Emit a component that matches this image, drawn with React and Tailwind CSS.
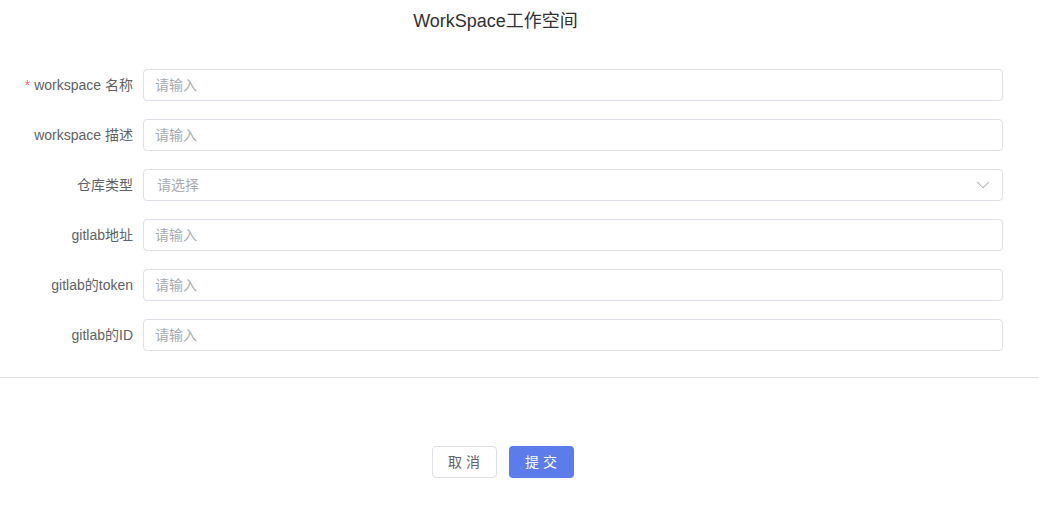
import { ChevronDown } from 'lucide-react'

const fields = [
  { label: 'workspace 名称', required: true, placeholder: '请输入' },
  { label: 'workspace 描述', placeholder: '请输入' },
  { label: '仓库类型', placeholder: '请选择', select: true },
  { label: 'gitlab地址', placeholder: '请输入' },
  { label: 'gitlab的token', placeholder: '请输入' },
  { label: 'gitlab的ID', placeholder: '请输入' },
]

export default function App() {
  return (
    <div
      className="w-[1039px] h-[509px] bg-white flex flex-col"
      style={{ fontFamily: '"Liberation Sans", "Noto Sans CJK SC", sans-serif' }}
    >
      <h2 className="mt-[9px] h-6 pr-[48px] text-center text-[18px] leading-6 text-[#303133]">WorkSpace工作空间</h2>

      {/* form */}
      <div className="mt-9 flex flex-col gap-[18px] pr-9">
        {fields.map(({ label, required, placeholder, select }) => (
          <div key={label} className="flex items-center h-8">
            <label className="w-[143px] shrink-0 pr-[10px] text-right text-[14px] text-[#606266]">
              {required && <span className="text-[#f56c6c] mr-1">*</span>}
              {label}
            </label>
            <div className="flex-1 h-8 flex items-center justify-between rounded border border-[#dcdfe6] pl-[11px] pr-[8px] text-[14px] text-[#a8abb2]">
              <span className={select ? 'pl-[2px]' : ''}>{placeholder}</span>
              {select && <ChevronDown size={22} strokeWidth={1.1} className="text-[#a8abb2]" />}
            </div>
          </div>
        ))}
      </div>

      <div className="mt-[26px] border-t border-[#dcdfe6]" />

      <div className="mt-[68px] pr-[34px] flex justify-center gap-3">
        <button className="w-[65px] h-8 rounded border border-[#dcdfe6] bg-white text-[14px] text-[#606266] tracking-[4px] pl-[4px]">
          取消
        </button>
        <button className="w-[65px] h-8 rounded bg-[#5b7cea] text-[14px] text-white tracking-[4px] pl-[4px]">
          提交
        </button>
      </div>
    </div>
  )
}
